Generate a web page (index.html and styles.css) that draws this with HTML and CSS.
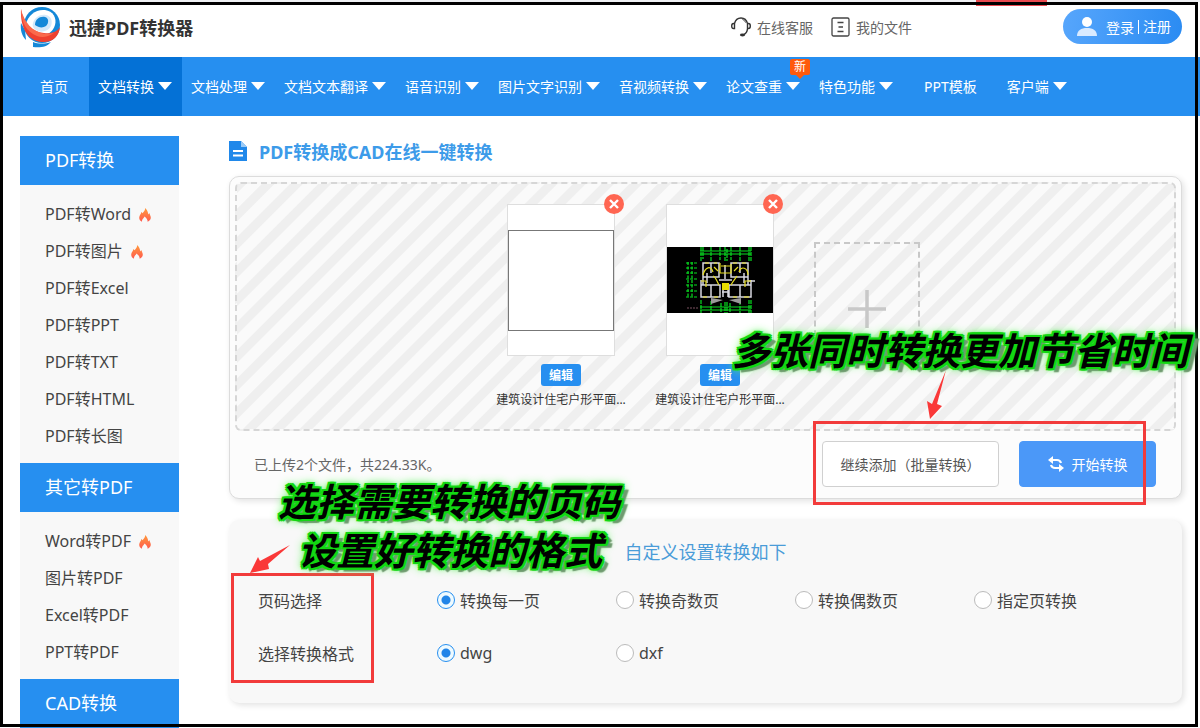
FILE: index.html
```html
<!DOCTYPE html>
<html lang="zh-CN">
<head>
<meta charset="utf-8">
<title>迅捷PDF转换器</title>
<link rel="stylesheet" href="styles.css">
</head>
<body>
<svg class="defs" width="0" height="0" aria-hidden="true">
  <defs>
    <linearGradient id="flameFill" x1="0" y1="0" x2="0" y2="1">
      <stop offset="0" stop-color="#ff9a3c"/><stop offset="1" stop-color="#ff5a4e"/>
    </linearGradient>
    <symbol id="flame" viewBox="0 0 12 14">
      <path fill="url(#flameFill)" d="M6 0C6.4 2 5 3.400 3.400 5.200C3.200 4.700 2.800 4.300 2.300 4C2.500 5.800 0.200 7 0.200 9.800C0.200 11.600 1.300 13 3 13.800C2.700 11.400 4.400 10.600 5.600 8.400C6.800 9.700 9 11.400 8.600 13.800C10.600 13 11.800 11.600 11.800 9.600C11.800 8 10.800 6.800 10.600 5.200C9.900 5.400 9.500 5.900 9.300 6.500C8.900 3.800 8 1.400 6 0Z"/>
    </symbol>
    <symbol id="cross" viewBox="0 0 20 20">
      <circle cx="10" cy="10" r="10" fill="#ff6652"/>
      <path d="M6 6L14 14M14 6L6 14" stroke="#fff" stroke-width="2.400"/>
    </symbol>
  </defs>
</svg>

<header class="topbar">
  <a class="brand" href="#">
    <svg width="41" height="42" viewBox="0 0 41 42" aria-hidden="true">
      <circle cx="22" cy="19" r="18" fill="#1488d8"/>
      <path d="M1 17L5 24L6 34C2 30 0 24 1 17Z" fill="#1488d8"/>
      <path d="M6 18C8 9 16 3 25 4C33 5 37 12 35 19C33 26 26 31 18 29C12 27 8 23 6 18Z" fill="#fff"/>
      <path d="M13 17C15 11 20 8 26 9C31 10 33 15 31 20C28 26 20 27 16 24C13 22 12 20 13 17Z" fill="#d4e9fa"/>
      <path d="M15 19C15 13 20 10 25 11C29 12 29 17 26 20C23 22 19 22 15 19Z" fill="#1488d8"/>
      <path d="M1 3C3 16 11 26 24 27C31 28 37 26 40 21C39 31 32 37 22 36C8 35 0 22 1 3Z" fill="#ee4130"/>
      <path d="M1 3C4 16 12 26 26 28L34 27C28 31 22 32 17 30C7 26 1 17 1 3Z" fill="#fa6a4c"/>
      <path d="M13 36C18 38 25 38 31 36C27 41 20 42 13 41Z" fill="#1488d8"/>
    </svg>
    <span>迅捷PDF转换器</span>
  </a>
  <div class="topbar-links">
    <a href="#">
      <svg width="20" height="20" viewBox="0 0 20 20" fill="none" stroke="#333" stroke-width="1.400" aria-hidden="true">
        <path d="M3.500 6.500C4.500 2.500 7 1 10 1S15.500 2.500 16.500 6.500M3.500 6.500V11.500H2.500C1.300 11.500 0.700 10.500 0.700 9S1.300 6.500 2.500 6.500ZM16.500 6.500H17.500C18.700 6.500 19.300 7.500 19.300 9S18.700 11.500 17.500 11.500H16.500ZM16.500 11.500C16.300 14.500 15 16.500 13 17.500"/>
        <path d="M11.500 2.500C13 3 14 4 14.500 5.500" stroke-width="1"/>
        <ellipse cx="11.500" cy="18" rx="2.600" ry="1.400" fill="#333" stroke="none"/>
      </svg>
      在线客服
    </a>
    <a href="#">
      <svg width="19" height="20" viewBox="0 0 19 20" fill="none" stroke="#444" stroke-width="1.300" aria-hidden="true">
        <rect x="1" y="1" width="17" height="18" rx="1.500"/>
        <path d="M6.500 5.500H12.500M7.500 10H12M6.500 14.500H12.500"/>
      </svg>
      我的文件
    </a>
    <a class="login" href="#">
      <svg width="20" height="19" viewBox="0 0 20 19" aria-hidden="true">
        <circle cx="10" cy="5" r="5" fill="#fff"/>
        <path d="M0 19C0 13.500 4 11 10 11S20 13.500 20 19Z" fill="#d9eaff"/>
      </svg>
      <span>登录</span><span class="login-sign">注册</span>
    </a>
  </div>
</header>

<nav class="nav">
  <a class="nav-plain" href="#">首页</a>
  <a class="nav-active nav-more" href="#">文档转换</a>
  <a class="nav-more" href="#">文档处理</a>
  <a class="nav-more" href="#">文档文本翻译</a>
  <a class="nav-more" href="#">语音识别</a>
  <a class="nav-more" href="#">图片文字识别</a>
  <a class="nav-more" href="#">音视频转换</a>
  <a class="nav-more" href="#">论文查重<span class="badge">新</span></a>
  <a class="nav-more" href="#">特色功能</a>
  <a class="nav-plain" href="#">PPT模板</a>
  <a class="nav-more" href="#">客户端</a>
</nav>

<div class="page">
  <aside class="sidebar">
    <h2>PDF转换</h2>
    <ul>
      <li><a href="#">PDF转Word <svg class="flame" aria-hidden="true"><use href="#flame"/></svg></a></li>
      <li><a href="#">PDF转图片 <svg class="flame" aria-hidden="true"><use href="#flame"/></svg></a></li>
      <li><a href="#">PDF转Excel</a></li>
      <li><a href="#">PDF转PPT</a></li>
      <li><a href="#">PDF转TXT</a></li>
      <li><a href="#">PDF转HTML</a></li>
      <li><a href="#">PDF转长图</a></li>
    </ul>
    <h2>其它转PDF</h2>
    <ul>
      <li><a href="#">Word转PDF <svg class="flame" aria-hidden="true"><use href="#flame"/></svg></a></li>
      <li><a href="#">图片转PDF</a></li>
      <li><a href="#">Excel转PDF</a></li>
      <li><a href="#">PPT转PDF</a></li>
    </ul>
    <h2>CAD转换</h2>
  </aside>

  <main class="content">
    <h1>
      <svg width="18" height="20" viewBox="0 0 18 20" aria-hidden="true">
        <path d="M0 0H12L18 6V20H0Z" fill="#2088ea"/><path d="M12 0L18 6H12Z" fill="#9ccbf7"/>
        <path d="M4 10H14M4 14.500H14" stroke="#fff" stroke-width="1.800"/>
      </svg>
      PDF转换成CAD在线一键转换
    </h1>

    <section class="upload">
      <div class="dropzone">
        <figure class="file">
          <div class="thumb">
            <div class="blank-sheet"></div>
            <button class="remove" aria-label="删除"><svg width="20" height="20" aria-hidden="true"><use href="#cross"/></svg></button>
          </div>
          <button class="edit">编辑</button>
          <figcaption>建筑设计住宅户形平面...</figcaption>
        </figure>
        <figure class="file">
          <div class="thumb">
            <svg class="plan" viewBox="0 0 106 66" fill="none" aria-hidden="true">
              <rect width="106" height="66" fill="#000"/>
              <g stroke="#08e020" stroke-width="1.200">
                <path d="M33 4H84M33 7H84M33 60H84M33 63H84"/>
                <path d="M34 0V14M36 0V12M44 0V14M53 0V13M58 0V14M60 2V14M64 0V13M73 0V14M82 0V14M84 0V14M34 53V66M44 54V66M54 56V66M58 55V66M60 55V66M63 56V66M73 54V66M82 53V66M84 53V66" stroke-dasharray="4 1"/>
                <path d="M19 16H31M19 21H31M19 26H31M19 32H31M19 38H31M19 44H31M19 50H31" stroke-dasharray="3 1"/>
                <path d="M21 15V51M25 15V51" stroke-dasharray="3 1.500"/>
              </g>
              <g stroke="#d8d8e0" stroke-width="1.500">
                <path d="M36 16H52V30H36ZM64 16H81V30H64ZM44 16V26M73 16V26M34 38H53V50H34ZM62 38H84V50H62ZM44 38V50M73 38V50M36 26V38M81 26V38M40 26V36M77 26V36M52 33H65M58 18V32M55 45H62M56 38V50M61 38V50M34 33V50M84 33V50M81 34H88"/>
              </g>
              <g stroke="#e5dc21" stroke-width="1.200">
                <path d="M38 16H42M47 16H50M66 16H70M75 16H79M36 50H40M47 50H51M66 50H70M77 50H82M36 28C38 20 44 18 46 25M72 25C74 18 81 21 81 28M46 29C49 30 50 35 52 38M70 29C68 32 66 34 64 38M53 16V26H64V17M34 34H39V40M78 40V34H84M54 19H63M47 20L51 24M67 24L71 20"/>
              </g>
              <rect x="55" y="36" width="7" height="7" fill="#e8de00"/>
              <path d="M44 51L56 53L44 57ZM74 51L62 53L74 57Z" fill="#9a9a9a"/>
              <path d="M20 61H31" stroke="#7d5360" stroke-dasharray="2 1"/>
            </svg>
            <button class="remove" aria-label="删除"><svg width="20" height="20" aria-hidden="true"><use href="#cross"/></svg></button>
          </div>
          <button class="edit">编辑</button>
          <figcaption>建筑设计住宅户形平面...</figcaption>
        </figure>
        <button class="add-tile" aria-label="添加文件">
          <svg width="38" height="38" viewBox="0 0 38 38" aria-hidden="true"><path d="M19 0V38M0 19H38" stroke="#c8c8c8" stroke-width="3.500"/></svg>
        </button>
      </div>
      <div class="upload-bar">
        <p>已上传2个文件，共224.33K。</p>
        <button class="btn">继续添加（批量转换）</button>
        <button class="btn btn-primary">
          <svg width="16" height="16" viewBox="0 0 16 16" fill="none" stroke="#fff" stroke-width="2.200" aria-hidden="true">
            <path d="M4 4H9Q12 4 13 7M12 12H7Q4 12 3 9"/>
            <path d="M0 4L5 0V8ZM16 12L11 8V16Z" fill="#fff" stroke="none"/>
          </svg>
          开始转换
        </button>
      </div>
    </section>

    <form class="settings">
      <h2>自定义设置转换如下</h2>
      <div class="row" role="radiogroup" aria-labelledby="pages-label">
        <span id="pages-label">页码选择</span>
        <label><input type="radio" name="pages" checked>转换每一页</label>
        <label><input type="radio" name="pages">转换奇数页</label>
        <label><input type="radio" name="pages">转换偶数页</label>
        <label><input type="radio" name="pages">指定页转换</label>
      </div>
      <div class="row" role="radiogroup" aria-labelledby="format-label">
        <span id="format-label">选择转换格式</span>
        <label><input type="radio" name="format" checked>dwg</label>
        <label><input type="radio" name="format">dxf</label>
      </div>
    </form>
  </main>
</div>

<div class="notes">
  <div class="edge"></div>
  <div class="tab"></div>
  <div class="frame"></div>
  <div class="box box-actions"></div>
  <div class="box box-options"></div>
  <svg class="arrow arrow-actions" width="20" height="50" viewBox="0 0 20 50" aria-hidden="true"><path d="M20 0L11 34L16 36L4 49L1 31L6 34Z" fill="#fa3838"/></svg>
  <svg class="arrow arrow-options" width="40" height="28" viewBox="0 0 40 28" aria-hidden="true"><path d="M40 0L18 19L19 24L0 28L8 12L10 16Z" fill="#fa3838"/></svg>
  <p class="note note-batch">多张同时转换更加节省时间</p>
  <p class="note note-pages">选择需要转换的页码</p>
  <p class="note note-format">设置好转换的格式</p>
</div>
</body>
</html>
```
FILE: styles.css
```css
* { box-sizing: border-box; }

body {
  position: relative;
  margin: 0;
  min-height: 100vh;
  overflow-x: hidden;
  background: #fff;
  color: #444;
  font-family: "Noto Sans", "Noto Sans CJK SC", sans-serif;
  font-size: 16px;
}

a { color: inherit; text-decoration: none; }
h1, h2, p, ul, figure { margin: 0; padding: 0; }
ul { list-style: none; }
button { font-family: inherit; cursor: pointer; }
.defs { position: absolute; }

/* Header */
.topbar {
  display: flex;
  align-items: center;
  justify-content: space-between;
  height: 57px;
  padding: 0 18px 4px 20px;
}
.brand {
  display: flex;
  align-items: center;
  gap: 8px;
  color: #333;
  font-size: 18px;
  font-weight: 700;
}
.topbar-links {
  display: flex;
  align-items: center;
  gap: 18px;
  color: #666;
  font-size: 14px;
}
.topbar-links a { display: flex; align-items: center; gap: 6px; }
.topbar-links .login {
  height: 35px;
  margin-left: 133px;
  padding: 0 11px 0 14px;
  gap: 0;
  border-radius: 18px;
  background: linear-gradient(100deg, #57a6fc, #2a8bf2);
  color: #fff;
}
.login svg { margin-right: 9px; }
.login-sign { margin-left: 4px; padding-left: 4px; border-left: 1px solid #fff; line-height: 14px; }

/* Main navigation */
.nav {
  display: flex;
  height: 59px;
  padding-left: 19px;
  background: #268ff0;
  color: #fff;
  font-size: 14px;
}
.nav a {
  position: relative;
  display: flex;
  align-items: center;
  gap: 4px;
  padding: 0 10px 2px 9px;
  white-space: nowrap;
}
.nav .nav-plain { padding: 0 21px 2px; }
.nav .nav-active { background: #0471d6; }
.nav-more::after {
  content: "";
  border: 7px solid transparent;
  border-top: 8px solid #fff;
  border-bottom: 0;
}
.badge {
  position: absolute;
  top: 2px;
  right: 0;
  width: 20px;
  border-radius: 2px;
  background: #ff5a0c;
  font-size: 12px;
  line-height: 16px;
  text-align: center;
}
.badge::after {
  content: "";
  position: absolute;
  top: 16px;
  left: 6px;
  border: 4px solid transparent;
  border-top-color: #ff5a0c;
  border-bottom: 0;
}

/* Page columns */
.page {
  display: flex;
  align-items: flex-start;
  gap: 50px;
  padding: 20px 18px 0 20px;
}
.sidebar { flex: none; width: 159px; background: #f8f8f8; }
.sidebar h2 {
  padding-left: 25px;
  background: #268ff0;
  color: #fff;
  font-size: 18px;
  font-weight: 400;
  line-height: 49px;
}
.sidebar ul { padding: 11px 0 8px 25px; }
.sidebar li { line-height: 37px; height: 37px; }
.sidebar a { display: flex; align-items: center; gap: 8px; }
.flame { width: 12px; height: 14px; }

.content { flex: 1; min-width: 0; }
.content h1 {
  display: flex;
  align-items: center;
  gap: 12px;
  height: 30px;
  margin-bottom: 10px;
  color: #3d9be9;
  font-size: 18px;
}

/* Upload panel */
.upload {
  padding: 5px;
  border: 1px solid #dcdcdc;
  border-radius: 10px;
  background: #fcfcfc;
  box-shadow: 2px 2px 6px rgba(0, 0, 0, 0.12);
}
.dropzone {
  display: flex;
  justify-content: center;
  gap: 29px;
  min-height: 249px;
  padding: 20px 0 0 5px;
  border: 2px dashed #d6d6d6;
  border-radius: 6px;
  background: repeating-linear-gradient(135deg, #efefef 0 6px, #fafafa 7px 17px, #efefef 18px 20px);
}
.file {
  display: flex;
  flex-direction: column;
  align-items: center;
  width: 130px;
}
.thumb {
  position: relative;
  display: flex;
  align-items: center;
  width: 108px;
  height: 152px;
  border: 1px solid #dedede;
  background: #fff;
}
.blank-sheet { width: 100%; height: 101px; border: 1px solid #777; }
.plan { width: 100%; }
.remove {
  position: absolute;
  top: -11px;
  right: -10px;
  width: 20px;
  height: 20px;
  padding: 0;
  border: 0;
  background: none;
}
.remove svg { display: block; }
.edit {
  width: 40px;
  height: 22px;
  margin: 8px 0 5px;
  padding: 0;
  border: 0;
  border-radius: 3px;
  background: #268ff0;
  color: #fff;
  font-size: 12px;
  font-weight: 700;
}
.file figcaption { color: #333; font-size: 12px; line-height: 18px; white-space: nowrap; }
.add-tile {
  width: 106px;
  height: 114px;
  margin-top: 38px;
  padding: 24px 0 0;
  border: 2px dashed #c8c8c8;
  background: none;
}
.upload-bar {
  display: flex;
  align-items: center;
  gap: 20px;
  padding: 10px 20px 6px 19px;
  font-size: 14px;
}
.upload-bar p { flex: 1; color: #666; }
.btn {
  display: flex;
  align-items: center;
  justify-content: center;
  gap: 8px;
  width: 177px;
  height: 46px;
  padding: 0;
  border: 1px solid #d0d0d0;
  border-radius: 4px;
  background: #fff;
  color: #555;
  font-size: 14px;
}
.btn-primary { width: 137px; border-color: #4b98f8; background: #4b98f8; color: #fff; }

/* Conversion settings */
.settings {
  margin-top: 21px;
  padding: 20px 29px 24px;
  border-radius: 10px;
  background: #f8f8f8;
  box-shadow: 2px 2px 6px rgba(0, 0, 0, 0.12);
}
.settings h2 {
  margin-bottom: 9px;
  color: #4a9cd8;
  font-size: 18px;
  font-weight: 400;
  line-height: 24px;
  text-align: center;
}
.row {
  display: grid;
  grid-template-columns: repeat(5, 1fr);
  align-items: center;
  height: 53px;
}
.row label { display: flex; align-items: center; gap: 5px; }
.row input {
  appearance: none;
  width: 18px;
  height: 18px;
  margin: 0;
  border: 1px solid #bbb;
  border-radius: 50%;
  background: #fff;
}
.row input:checked {
  border-color: #268ff0;
  background: radial-gradient(circle, #2185e8 0 4px, #eefaff 5px);
}

/* Annotations laid over the page */
.notes { position: absolute; inset: 0; overflow: hidden; pointer-events: none; }
.notes > * { position: absolute; }
.edge { inset: 0 0 auto; height: 2px; background: #eef0f3; }
.tab { top: 0; left: 976px; width: 71px; height: 6px; background: #ea4a50; }
.frame { inset: 2px 2px 1px 0; border: 3px solid #000; }
.box { border: 3px solid #f23b3b; }
.box-actions { top: 421px; left: 813px; width: 333px; height: 84px; }
.box-options { top: 573px; left: 231px; width: 143px; height: 110px; }
.arrow-actions { top: 370px; left: 926px; }
.arrow-options { top: 545px; left: 250px; }
.note {
  color: #000;
  font-size: 38px;
  font-style: italic;
  font-weight: 700;
  line-height: 48px;
  white-space: nowrap;
  text-shadow:
    2px 0 #12d812, -2px 0 #12d812, 0 2px #12d812, 0 -2px #12d812,
    2px 2px #12d812, -2px 2px #12d812, 2px -2px #12d812, -2px -2px #12d812,
    0 0 4px #2be82b, 6px 4px 1px #6f9a6f, 0 0 8px #4cf04c, 0 0 12px #8cf78c;
}
.note-batch { top: 326px; left: 732px; }
.note-pages { top: 477px; left: 278px; }
.note-format { top: 526px; left: 298px; }
```
